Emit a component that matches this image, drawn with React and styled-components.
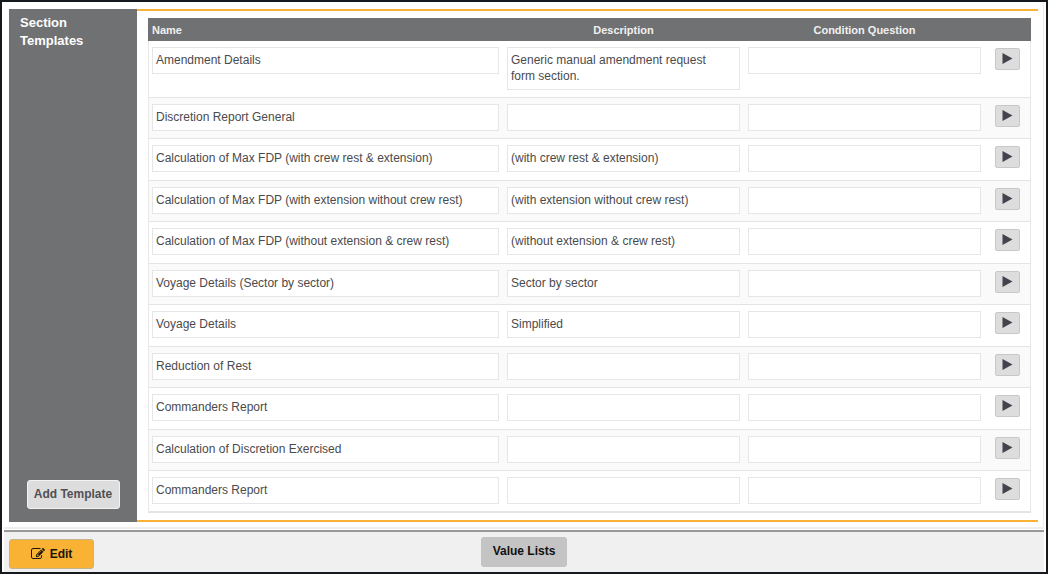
import React from 'react';
import styled, { createGlobalStyle } from 'styled-components';

const templates = [
  { name: 'Amendment Details', description: 'Generic manual amendment request form section.', lines: 2 },
  { name: 'Discretion Report General', description: '' },
  { name: 'Calculation of Max FDP (with crew rest & extension)', description: '(with crew rest & extension)' },
  { name: 'Calculation of Max FDP (with extension without crew rest)', description: '(with extension without crew rest)' },
  { name: 'Calculation of Max FDP (without extension & crew rest)', description: '(without extension & crew rest)' },
  { name: 'Voyage Details (Sector by sector)', description: 'Sector by sector' },
  { name: 'Voyage Details', description: 'Simplified' },
  { name: 'Reduction of Rest', description: '' },
  { name: 'Commanders Report', description: '' },
  { name: 'Calculation of Discretion Exercised', description: '' },
  { name: 'Commanders Report', description: '' },
];

const GlobalStyle = createGlobalStyle`
  * {
    box-sizing: border-box;
  }
  body {
    margin: 0;
    background: #fff;
    font-family: 'Liberation Sans', Arial, sans-serif;
  }
  button, textarea {
    font-family: inherit;
  }
`;

const Page = styled.div`
  display: flex;
  flex-direction: column;
  min-height: 100vh;
  border: 2px solid #15181d;
`;
const Main = styled.main`
  display: flex;
  flex: 1;
  margin: 0 2px 1px;
  padding: 7px 5px 5px;
  border-right: 1px solid #eee;
  border-bottom: 2px solid #eee;
`;
const Sidebar = styled.aside`
  display: flex;
  flex-direction: column;
  justify-content: space-between;
  flex: 0 0 128px;
  padding: 5px 11px 13px;
  background: #707173;
`;
const Title = styled.h2`
  margin: 0;
  color: #fff;
  font-size: 13px;
  line-height: 18px;
  font-weight: 700;
`;
const Content = styled.section`
  flex: 1;
  padding: 7px 7px 7px 11px;
  border-top: 2px solid #f9b233;
  border-bottom: 2px solid #f9b233;
`;
const Table = styled.table`
  width: 100%;
  table-layout: fixed;
  border-collapse: separate;
  border-spacing: 0;
`;
const HeadCell = styled.th`
  width: ${(p) => p.$width || 'auto'};
  height: 23px;
  padding: 0 4px;
  background: #707173;
  color: #f0f0f0;
  font-size: 11px;
  line-height: 12px;
  font-weight: 700;
  text-align: ${(p) => p.$align || 'center'};
`;
const Row = styled.tr`
  height: 41px;
  background: #fff;
  &:nth-child(even) {
    background: #fafafa;
  }
  &:nth-child(odd) {
    height: 42px;
  }
`;
const Cell = styled.td`
  padding: 6px 4px;
  border-bottom: 1px solid #e4e4e4;
  vertical-align: top;
  &:first-child {
    padding-left: 3px;
    border-left: 1px solid #e8e8e8;
  }
  &:last-child {
    padding: 7px 10px 6px;
    border-right: 1px solid #e8e8e8;
  }
  tr:first-child > & {
    padding-bottom: 7px;
  }
  tr:last-child > & {
    border-bottom-width: 2px;
  }
`;
const Field = styled.textarea`
  display: block;
  width: 100%;
  height: ${(p) => (p.rows > 1 ? '43px' : '27px')};
  padding: 4px 18px 4px 3px;
  border: 1px solid #e6e6e6;
  border-radius: 0;
  outline: none;
  resize: none;
  overflow: hidden;
  background: #fff;
  color: #4a4a4d;
  font-size: 12px;
  line-height: 16px;
`;
const OpenButton = styled.button`
  display: flex;
  justify-content: center;
  width: 25px;
  height: 22px;
  padding: 4px 0 0;
  border: 1px solid #c8c8c8;
  border-radius: 2px;
  background: #ddd;
  color: #43434d;
`;
const AddButton = styled.button`
  align-self: center;
  width: 93px;
  height: 29px;
  padding: 0 0 2px;
  border: 1px solid #f2f2f2;
  border-radius: 3px;
  background: #ddd;
  color: #505054;
  font-size: 12px;
  font-weight: 700;
  white-space: nowrap;
`;
const Footer = styled.footer`
  display: grid;
  grid-template-columns: 1fr auto 1fr;
  align-items: start;
  height: 42px;
  margin: 0 2px;
  padding: 5px;
  border-top: 2px solid #999;
  background: #f0f0f0;
`;
const EditButton = styled.button`
  display: flex;
  align-items: center;
  justify-content: center;
  gap: 5px;
  width: 85px;
  height: 30px;
  margin-top: 2px;
  border: 1px solid #c4b48e;
  border-radius: 3px;
  background: #f9b233;
  color: #1c1608;
  font-size: 12px;
  font-weight: 700;
`;
const ValueButton = styled.button`
  width: 86px;
  height: 30px;
  padding: 0 0 2px;
  border: 0;
  border-radius: 3px;
  background: #c4c4c4;
  color: #111;
  font-size: 12px;
  font-weight: 700;
`;

const PlayIcon = () => (
  <svg width="11" height="11" viewBox="0 0 11 11" aria-hidden="true">
    <path d="M0.5 0L10.5 5.5L0.5 11Z" fill="currentColor" />
  </svg>
);

const EditIcon = () => (
  <svg width="14" height="14" viewBox="0 0 1792 1792" fill="currentColor" aria-hidden="true">
    <path d="M888 1184l116-116-152-152-116 116v56h96v96h56zm440-720q-16-16-33 1l-350 350q-17 17-1 33t33-1l350-350q17-17 1-33zm80 594v190q0 119-84.5 203.5t-203.5 84.5h-832q-119 0-203.5-84.5t-84.5-203.5v-832q0-119 84.5-203.5t203.5-84.5h832q63 0 117 25 15 7 18 23 3 17-9 29l-49 49q-14 14-32 8-23-6-45-6h-832q-66 0-113 47t-47 113v832q0 66 47 113t113 47h832q66 0 113-47t47-113v-126q0-13 9-22l64-64q15-15 35-7t20 29zm-96-738l288 288-672 672h-288v-288zm444 132l-92 92-288-288 92-92q28-28 68-28t68 28l152 152q28 28 28 68t-28 68z" />
  </svg>
);

const App = () => (
  <>
    <GlobalStyle />
    <Page>
      <Main>
        <Sidebar>
          <Title>Section Templates</Title>
          <AddButton type="button">Add Template</AddButton>
        </Sidebar>
        <Content>
          <Table>
            <thead>
              <tr>
                <HeadCell $width="355px" $align="left">Name</HeadCell>
                <HeadCell>Description</HeadCell>
                <HeadCell>Condition Question</HeadCell>
                <HeadCell $width="46px" aria-label="Open" />
              </tr>
            </thead>
            <tbody>
              {templates.map((t, idx) => (
                <Row key={idx}>
                  <Cell>
                    <Field aria-label="Name" rows={1} defaultValue={t.name} />
                  </Cell>
                  <Cell>
                    <Field aria-label="Description" rows={t.lines || 1} defaultValue={t.description} />
                  </Cell>
                  <Cell>
                    <Field aria-label="Condition Question" rows={1} />
                  </Cell>
                  <Cell>
                    <OpenButton type="button" aria-label={`Open ${t.name}`}>
                      <PlayIcon />
                    </OpenButton>
                  </Cell>
                </Row>
              ))}
            </tbody>
          </Table>
        </Content>
      </Main>
      <Footer>
        <EditButton type="button">
          <EditIcon />
          Edit
        </EditButton>
        <ValueButton type="button">Value Lists</ValueButton>
      </Footer>
    </Page>
  </>
);

export default App;
